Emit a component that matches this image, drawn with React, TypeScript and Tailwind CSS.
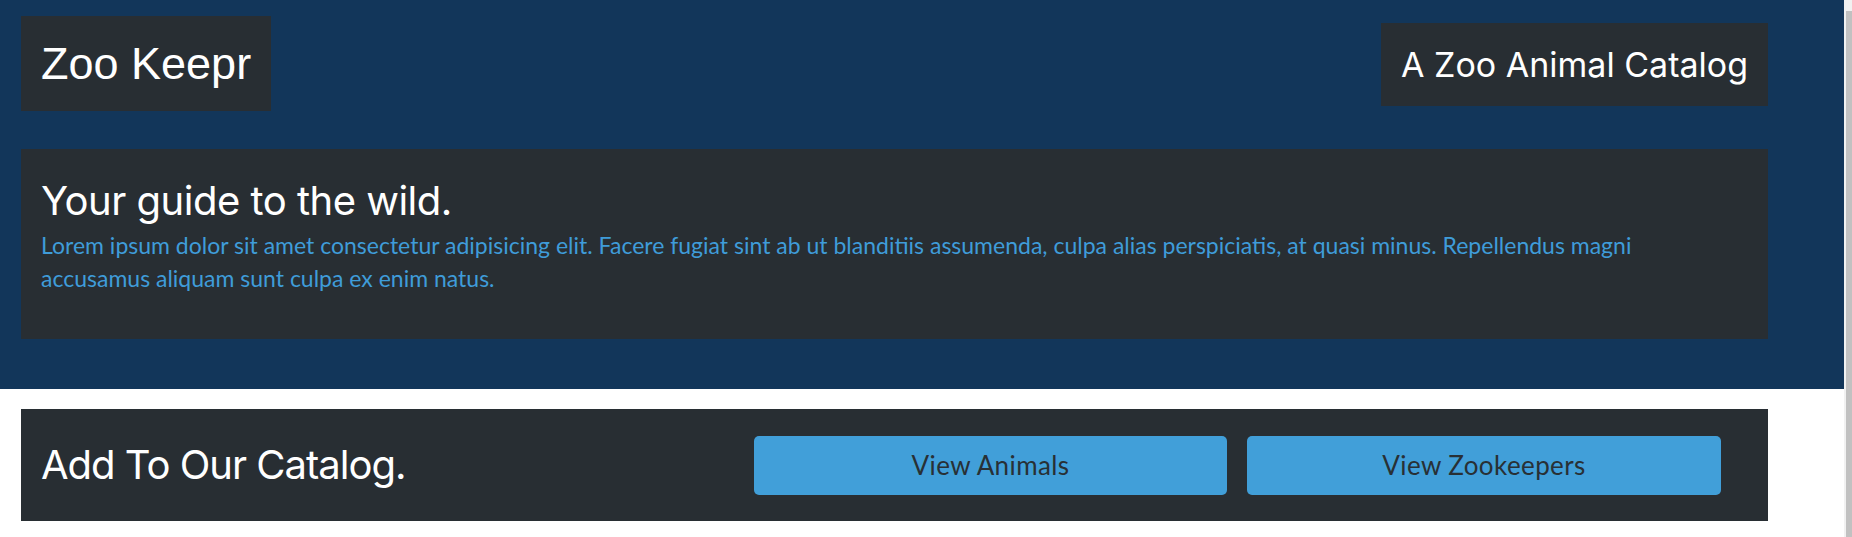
import React from "react";

const heading = { fontFamily: "Inter, 'Noto Sans', sans-serif" };
const body = { fontFamily: "Lato, 'Noto Sans', sans-serif" };

export default function App() {
  return (
    <div className="flex min-h-screen w-full bg-white">
      <div className="flex-1">
        <header className="bg-[#12365a] pl-[21px] pr-[76px] pt-4 pb-[50px]">
          <div className="flex items-start justify-between">
            <div className="flex h-[95px] items-center bg-[#282e33] px-5">
              <h1
                className="text-[45px] leading-none text-white"
                style={{ fontFamily: "'Liberation Sans', Arial, sans-serif" }}
              >
                Zoo Keepr
              </h1>
            </div>
            <div className="mt-[7px] flex h-[83px] items-center bg-[#282e33] px-5">
              <h2 className="text-[34px] leading-none text-white" style={heading}>
                A Zoo Animal Catalog
              </h2>
            </div>
          </div>
          <section className="mt-[38px] h-[190px] bg-[#282e33] px-5 pt-[28px]">
            <h2 className="text-[40px] leading-[1.2] tracking-[-0.5px] text-white" style={heading}>
              Your guide to the wild.
            </h2>
            <p className="mt-[4px] pr-[40px] text-[23px] leading-[33px] text-[#3f9cd9]" style={body}>
              Lorem ipsum dolor sit amet consectetur adipisicing elit. Facere fugiat sint ab ut blanditiis
              assumenda, culpa alias perspiciatis, at quasi minus. Repellendus magni accusamus aliquam sunt
              culpa ex enim natus.
            </p>
          </section>
        </header>
        <div className="pl-[21px] pr-[76px] pt-5">
          <section className="flex h-[112px] items-center bg-[#282e33] pl-5 pr-[47px]">
            <h2 className="flex-1 text-[40px] leading-none tracking-[-1px] text-white" style={heading}>
              Add To Our Catalog.
            </h2>
            <div className="flex gap-5">
              <button
                className="h-[59px] w-[473px] rounded-[5px] bg-[#419fd9] text-[26px] tracking-[0.4px] text-[#283035]"
                style={body}
              >
                View Animals
              </button>
              <button
                className="h-[59px] w-[474px] rounded-[5px] bg-[#419fd9] text-[26px] tracking-[0.4px] text-[#283035]"
                style={body}
              >
                View Zookeepers
              </button>
            </div>
          </section>
        </div>
      </div>
      <div className="w-[8px] bg-[#f1f1f1]">
        <div className="ml-[2px] mt-[11px] h-[526px] w-[6px] bg-[#c1c1c1]" />
      </div>
    </div>
  );
}
